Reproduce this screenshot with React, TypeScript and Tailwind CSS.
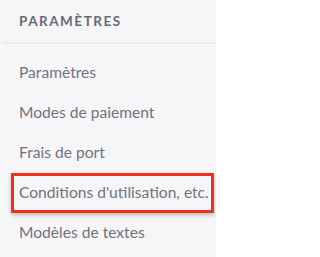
const ITEMS = [
  'Paramètres',
  'Modes de paiement',
  'Frais de port',
  "Conditions d'utilisation, etc.",
  'Modèles de textes',
];

export default function App() {
  return (
    <div className="w-[216px] h-[257px] overflow-hidden bg-[#f6f6f9] font-['Lato',sans-serif]">
      <div className="h-[42px] flex items-center pl-[19px] pt-[1px] text-[13.5px] font-bold tracking-[1.5px] text-[#6a6a76]">
        PARAMÈTRES
      </div>
      <div className="ml-[2px] h-[2px] bg-[#ebebef]" />
      <ul className="pt-[9px]">
        {ITEMS.map((label, i) => {
          const active = i === 3;
          return (
            <li
              key={label}
              className={
                active
                  ? 'ml-[11px] w-[203px] h-[40px] flex items-center pl-[5px] border-[3px] border-[#f0301c] shadow-[0_2px_4px_rgba(0,0,0,0.25)] text-[15.6px] text-[#72727f] whitespace-nowrap'
                  : 'h-[40px] flex items-center pl-[19px] text-[15.6px] text-[#72727f] whitespace-nowrap'
              }
            >
              {label}
            </li>
          );
        })}
      </ul>
    </div>
  );
}
